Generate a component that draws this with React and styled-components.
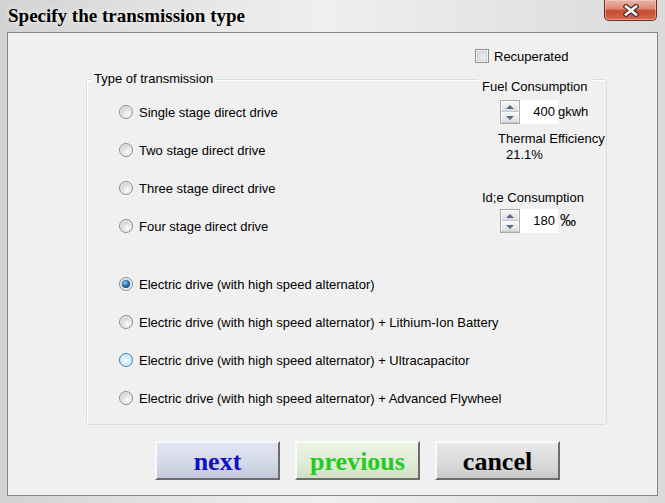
import React from 'react';
import styled, { createGlobalStyle, css } from 'styled-components';

const GlobalStyle = createGlobalStyle`
  html, body {
    margin: 0;
    padding: 0;
    background: #e0e0e0;
  }
  body {
    font-family: "Liberation Sans", Arial, sans-serif;
    font-size: 13px;
    color: #000;
  }
`;

const Window = styled.div`
  width: 665px;
  height: 503px;
  box-sizing: border-box;
  display: flex;
  flex-direction: column;
  padding: 0 7px 7px 7px;
  background: linear-gradient(90deg, #d2d2d2 0%, #e3e3e3 25%, #efefef 48%, #e6e6e6 72%, #dadada 100%);
  overflow: hidden;
`;

const TitleBar = styled.div`
  height: 32px;
  display: flex;
  align-items: flex-start;
  justify-content: space-between;
`;

const Title = styled.div`
  margin: 5px 0 0 1px;
  font: bold 19px/22px "Liberation Serif", "Times New Roman", serif;
  text-shadow: 0 0 6px rgba(255, 255, 255, 0.9);
`;

const CloseButton = styled.div`
  width: 53px;
  height: 21px;
  margin-right: 1px;
  box-sizing: border-box;
  border: 1px solid #6a2e22;
  border-top: none;
  border-radius: 0 0 5px 5px;
  background: linear-gradient(#ebb3a6 0%, #de8a78 42%, #c9492f 55%, #d56a50 100%);
  box-shadow: inset 0 0 0 1px rgba(255, 220, 210, 0.45);
  display: flex;
  align-items: center;
  justify-content: center;
`;

const Client = styled.div`
  flex: 1;
  border: 1px solid #868686;
  background: #f0f0f0;
  display: flex;
  flex-direction: column;
`;

const CheckRow = styled.label`
  margin: 15px 0 0 467px;
  height: 16px;
  display: flex;
  align-items: center;
  gap: 5px;
`;

const CheckBox = styled.span`
  width: 14px;
  height: 14px;
  box-sizing: border-box;
  border: 1px solid #8e8f8f;
  background: linear-gradient(135deg, #d4d4d4, #f6f6f6);
  box-shadow: inset 0 0 0 1px #f4f4f4, inset 0 0 0 2px #d0d0d0;
`;

const Group = styled.div`
  position: relative;
  margin: 15px 0 0 78px;
  width: 521px;
  height: 346px;
  box-sizing: border-box;
  border: 1px solid #d5dfe5;
  border-radius: 3px;
  box-shadow: inset 1px 1px 0 #fff;
  display: grid;
  grid-template-columns: 391px 127px;
  align-items: start;
`;

const Legend = styled.span`
  position: absolute;
  top: -9px;
  left: 5px;
  padding: 0 2px;
  line-height: 16px;
  background: #f0f0f0;
`;

const RadioList = styled.div`
  padding: 13px 0 0 32px;
  display: flex;
  flex-direction: column;
  white-space: nowrap;
`;

const RadioRow = styled.label`
  height: 38px;
  display: flex;
  align-items: center;
  gap: 6px;
  margin-top: ${p => (p.$spaced ? '20px' : '0')};
`;

const RadioDot = styled.span`
  flex: none;
  width: 14px;
  height: 14px;
  box-sizing: border-box;
  border-radius: 50%;
  border: 1px solid #8a8b8b;
  background: radial-gradient(circle at 62% 68%, #fdfdfd 0%, #e2e2e2 40%, #bdbdbd 100%);
  box-shadow: inset 0 0 0 1px #f2f2f2;
  display: flex;
  align-items: center;
  justify-content: center;

  ${p => p.$hover && css`
    border-color: #3c7fb1;
    background: radial-gradient(circle at 50% 55%, #f1f9fe 0%, #cfeafb 55%, #9fd1f3 100%);
    box-shadow: inset 0 0 0 1px #def1fc;
  `}

  ${p => p.$checked && css`
    &::after {
      content: '';
      width: 8px;
      height: 8px;
      border-radius: 50%;
      background: radial-gradient(circle at 40% 35%, #8fd0f6 0%, #2a6db0 45%, #0c2c57 100%);
    }
  `}
`;

const Panel = styled.div`
  margin-top: -2px;
  display: flex;
  flex-direction: column;
  align-items: flex-start;
  white-space: nowrap;
`;

const PanelLabel = styled.span`
  padding: 0 4px;
  line-height: 18px;
  background: #f0f0f0;
`;

const Text = styled.span`
  line-height: 16px;
  margin: ${p => p.$mt || 0}px 0 0 ${p => p.$ml || 0}px;
`;

const SpinRow = styled.div`
  margin: ${p => p.$mt}px 0 0 22px;
  display: flex;
  align-items: center;
`;

const Spin = styled.div`
  width: 58px;
  height: 24px;
  display: flex;
  background: #fff;
`;

const SpinButtons = styled.div`
  width: 20px;
  box-sizing: border-box;
  border: 1px solid #a9a9a9;
  display: flex;
  flex-direction: column;
`;

const SpinHalf = styled.div`
  flex: 1;
  display: flex;
  align-items: center;
  justify-content: center;
  background: linear-gradient(#f6f6f6, #dcdcdc);
  border: 1px solid #fdfdfd;
  border-bottom-color: #c8c8c8;
`;

const Arrow = styled.span`
  width: 0;
  height: 0;
  border-left: 4px solid transparent;
  border-right: 4px solid transparent;
  ${p => (p.$up
    ? 'border-bottom: 4px solid #566a90;'
    : 'border-top: 4px solid #566a90;')}
`;

const SpinValue = styled.div`
  flex: 1;
  text-align: right;
  padding-right: 3px;
  line-height: 24px;
`;

const Unit = styled.span`
  margin-left: ${p => p.$ml ?? 0}px;
  font-size: ${p => p.$size || 13}px;
  line-height: 24px;
`;

const ButtonRow = styled.div`
  margin: 16px 0 0 147px;
  display: flex;
  gap: 15px;
`;

const Button = styled.button`
  width: 125px;
  height: 39px;
  box-sizing: border-box;
  padding: 3px 0 0;
  border: 2px solid;
  border-color: #fafafa #6c6c6c #6c6c6c #fafafa;
  background: ${p => p.$bg};
  color: ${p => p.$color};
  font: bold 26px/1 "Liberation Serif", "Times New Roman", serif;
  cursor: pointer;
`;

const Spinner = ({ value, unit, mt, unitGap, unitSize }) => (
  <SpinRow $mt={mt}>
    <Spin>
      <SpinButtons>
        <SpinHalf><Arrow $up /></SpinHalf>
        <SpinHalf><Arrow /></SpinHalf>
      </SpinButtons>
      <SpinValue>{value}</SpinValue>
    </Spin>
    <Unit $ml={unitGap} $size={unitSize}>{unit}</Unit>
  </SpinRow>
);

const options = [
  { label: 'Single stage direct drive' },
  { label: 'Two stage direct drive' },
  { label: 'Three stage direct drive' },
  { label: 'Four stage direct drive' },
  { label: 'Electric drive (with high speed alternator)', checked: true, spaced: true },
  { label: 'Electric drive (with high speed alternator) + Lithium-Ion Battery' },
  { label: 'Electric drive (with high speed alternator) + Ultracapacitor', hover: true },
  { label: 'Electric drive (with high speed alternator) + Advanced Flywheel' },
];

const App = () => (
  <>
    <GlobalStyle />
    <Window>
      <TitleBar>
        <Title>Specify the transmission type</Title>
        <CloseButton>
          <svg width="16" height="13" viewBox="0 0 16 13">
            <path d="M3 2.5 L13 10.5 M13 2.5 L3 10.5" stroke="#4a2a26" strokeWidth="5" strokeLinecap="square" />
            <path d="M3 2.5 L13 10.5 M13 2.5 L3 10.5" stroke="#fff" strokeWidth="2.6" strokeLinecap="square" />
          </svg>
        </CloseButton>
      </TitleBar>

      <Client>
        <CheckRow>
          <CheckBox />
          <span>Recuperated</span>
        </CheckRow>

        <Group>
          <Legend>Type of transmission</Legend>
          <RadioList>
            {options.map(o => (
              <RadioRow key={o.label} $spaced={o.spaced}>
                <RadioDot $checked={o.checked} $hover={o.hover} />
                <span>{o.label}</span>
              </RadioRow>
            ))}
          </RadioList>

          <Panel>
            <PanelLabel>Fuel Consumption</PanelLabel>
            <Spinner value="400" unit="gkwh" mt={4} unitGap={0} />
            <Text $mt={7} $ml={20}>Thermal Efficiency</Text>
            <Text $ml={28}>21.1%</Text>
            <Text $mt={27} $ml={4}>Id;e Consumption</Text>
            <Spinner value="180" unit="‰" mt={3} unitGap={2} unitSize={16} />
          </Panel>
        </Group>

        <ButtonRow>
          <Button $color="#1010c4" $bg="linear-gradient(#e2e6f1, #d3d8e6 60%, #c3c9da)">next</Button>
          <Button $color="#22cc22" $bg="linear-gradient(#ecf3e4, #e0ebd6 60%, #d1dfc4)">previous</Button>
          <Button $color="#000" $bg="linear-gradient(#e8e8e8, #dadada 60%, #c9c9c9)">cancel</Button>
        </ButtonRow>
      </Client>
    </Window>
  </>
);

export default App;
